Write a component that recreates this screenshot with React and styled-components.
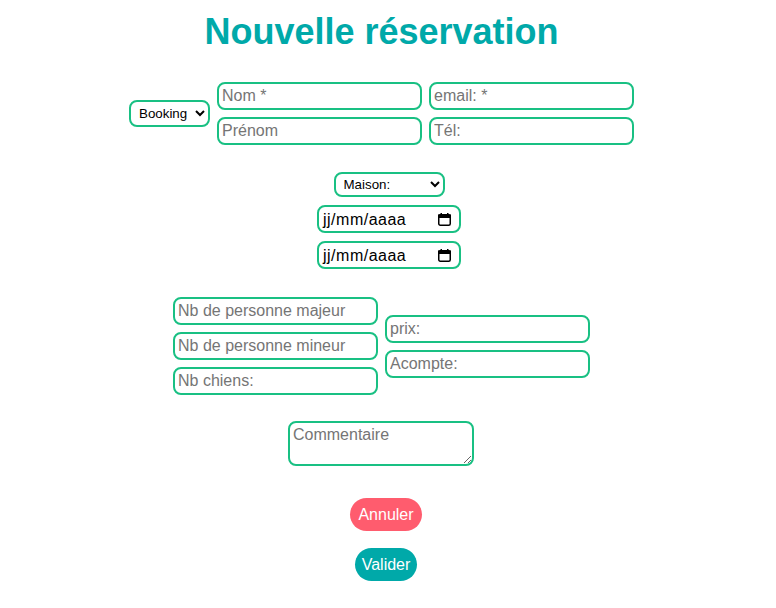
import React from "react";
import styled, { createGlobalStyle } from "styled-components";

const GREEN = "#19c083";
const TEAL = "#00a9a9";
const RED = "#ff5c6e";

const Global = createGlobalStyle`
  html, body { margin: 0; padding: 0; background: #fff; }
  body { font-family: "Liberation Sans", Arial, sans-serif; }
  * { box-sizing: border-box; }
  input::placeholder, textarea::placeholder { color: #757575; opacity: 1; }
`;

const Page = styled.div`
  width: 776px;
  display: flex;
  flex-direction: column;
  align-items: center;
  padding-top: 11px;
`;

const Title = styled.h1`
  margin: 0 13px 0 0;
  font-size: 36px;
  line-height: 41px;
  font-weight: 700;
  color: ${TEAL};
`;

const Row = styled.div`
  display: flex;
  align-items: center;
  gap: ${(p) => p.$gap ?? 7}px;
  margin-top: ${(p) => p.$top}px;
  margin-left: ${(p) => p.$ml ?? 0}px;
  margin-right: ${(p) => p.$mr ?? 0}px;
`;

const Column = styled.div`
  display: flex;
  flex-direction: column;
  align-items: center;
  gap: ${(p) => p.$gap ?? 7}px;
  margin-top: ${(p) => p.$top ?? 0}px;
  margin-left: ${(p) => p.$ml ?? 0}px;
  margin-right: ${(p) => p.$mr ?? 0}px;
`;

const Grid = styled.div`
  display: grid;
  grid-template-columns: 205px 205px;
  gap: 7px;
`;

const Field = styled.input`
  width: 205px;
  height: 28px;
  border: 2px solid ${GREEN};
  border-radius: 8px;
  padding: 0 3px;
  font-family: "Liberation Sans", Arial, sans-serif;
  font-size: 16px;
  color: #000;
  background: #fff;
  outline: none;
`;

const Select = styled.select`
  width: ${(p) => p.$w}px;
  height: ${(p) => p.$h}px;
  border: 2px solid ${GREEN};
  border-radius: 8px;
  padding: 0 2px 0 4px;
  font-family: "Liberation Sans", Arial, sans-serif;
  font-size: 13.33px;
  color: #000;
  background: #fff;
  outline: none;
`;

const DateBox = styled.div`
  width: 144px;
  height: 28px;
  border: 2px solid ${GREEN};
  border-radius: 8px;
  padding: 1px 7px 0 4px;
  display: flex;
  align-items: center;
  justify-content: space-between;
  font-size: 16px;
  letter-spacing: 0.5px;
  color: #000;
  background: #fff;
`;

const Area = styled.textarea`
  width: 186px;
  height: 45px;
  margin-top: 26px;
  margin-right: 14px;
  border: 2px solid ${GREEN};
  border-radius: 8px;
  padding: 3px 3px;
  font-family: "Liberation Sans", Arial, sans-serif;
  font-size: 16px;
  color: #000;
  background: #fff;
  outline: none;
  display: block;
`;

const Pill = styled.button`
  height: 33px;
  padding: 0 ${(p) => p.$px}px;
  border: none;
  border-radius: 17px;
  background: ${(p) => p.$bg};
  color: #fff;
  font-family: "Liberation Sans", Arial, sans-serif;
  font-size: 16px;
  margin-top: ${(p) => p.$top}px;
  margin-left: ${(p) => p.$ml ?? 0}px;
  cursor: pointer;
`;

const CalendarIcon = () => (
  <svg width="15" height="15" viewBox="0 0 15 15">
    <rect x="1.75" y="2.75" width="11.5" height="10.5" rx="1.5" fill="none" stroke="#000" strokeWidth="1.5" />
    <rect x="1" y="2.5" width="13" height="3.5" fill="#000" />
    <rect x="3.5" y="1" width="1.5" height="2.5" fill="#000" />
    <rect x="10" y="1" width="1.5" height="2.5" fill="#000" />
  </svg>
);

const DateField = () => (
  <DateBox>
    <span>jj/mm/aaaa</span>
    <CalendarIcon />
  </DateBox>
);

export default function App() {
  return (
    <>
      <Global />
      <Page>
        <Title>Nouvelle réservation</Title>

        <Row $top={30} $mr={13}>
          <Select $w={81} $h={27} defaultValue="Booking">
            <option>Booking</option>
            <option>Airbnb</option>
            <option>Direct</option>
          </Select>
          <Grid>
            <Field placeholder="Nom *" />
            <Field placeholder="email: *" />
            <Field placeholder="Prénom" />
            <Field placeholder="Tél:" />
          </Grid>
        </Row>

        <Column $top={27} $gap={8} $ml={2}>
          <Select $w={111} $h={25} defaultValue="Maison:">
            <option>Maison:</option>
          </Select>
          <DateField />
          <DateField />
        </Column>

        <Row $top={28} $mr={13}>
          <Column>
            <Field placeholder="Nb de personne majeur" />
            <Field placeholder="Nb de personne mineur" />
            <Field placeholder="Nb chiens:" />
          </Column>
          <Column>
            <Field placeholder="prix:" />
            <Field placeholder="Acompte:" />
          </Column>
        </Row>

        <Area placeholder="Commentaire" />

        <Pill $bg={RED} $px={8} $top={32} $ml={-4}>Annuler</Pill>
        <Pill $bg={TEAL} $px={7} $top={17} $ml={-4}>Valider</Pill>
      </Page>
    </>
  );
}
